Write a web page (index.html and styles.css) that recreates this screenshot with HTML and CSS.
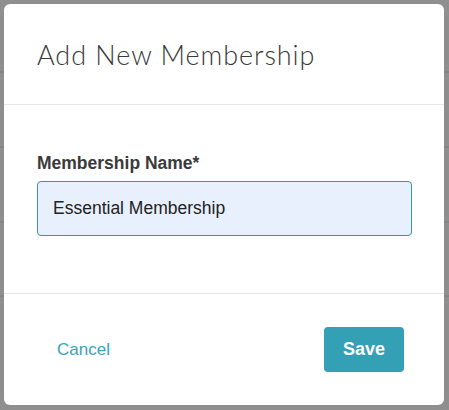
FILE: index.html
```html
<!DOCTYPE html>
<html>
<head>
<meta charset="utf-8">
<link rel="stylesheet" href="styles.css">
</head>
<body>
<div class="modal">
  <div class="modal-header">
    <h1 class="modal-title">Add New Membership</h1>
  </div>
  <div class="modal-body">
    <label class="field-label" for="name">Membership Name*</label>
    <input class="field-input" id="name" type="text" value="Essential Membership">
  </div>
  <div class="modal-footer">
    <button class="btn-cancel" type="button">Cancel</button>
    <button class="btn-save" type="button">Save</button>
  </div>
</div>
</body>
</html>
```
FILE: styles.css
```css
html, body {
  margin: 0;
  padding: 0;
}
body {
  width: 449px;
  height: 410px;
  overflow: hidden;
  background-color: #8f8f8f;
  background-image:
    linear-gradient(#858585, #858585),
    linear-gradient(#858585, #858585),
    linear-gradient(#858585, #858585),
    linear-gradient(#858585, #858585);
  background-repeat: no-repeat;
  background-size: 100% 2px;
  background-position: 0 71px, 0 146px, 0 221px, 0 295px;
  padding: 4px;
  box-sizing: border-box;
  font-family: "Liberation Sans", Arial, sans-serif;
}
.modal {
  width: 440px;
  height: 401px;
  background: #fff;
  border-radius: 6px;
  display: flex;
  flex-direction: column;
  overflow: hidden;
}
.modal-header {
  height: 100px;
  border-bottom: 1px solid #e6e6e6;
  display: flex;
  align-items: center;
  padding-left: 33px;
}
.modal-title {
  margin: 0;
  font-family: Lato, "Liberation Sans", sans-serif;
  font-weight: 300;
  font-size: 27px;
  color: #3a3a3a;
  letter-spacing: 0.95px;
}
.modal-body {
  height: 189px;
  box-sizing: border-box;
  border-bottom: 1px solid #e6e6e6;
  padding: 48px 32px 0 33px;
  display: flex;
  flex-direction: column;
}
.field-label {
  font-weight: bold;
  font-size: 17.5px;
  line-height: 20px;
  color: #3a3a3a;
  margin-bottom: 8px;
}
.field-input {
  width: 375px;
  height: 55px;
  box-sizing: border-box;
  border: 1px solid #3a9a8c;
  border-radius: 4px;
  background: #e8f0fe;
  padding: 0 15px;
  font-family: "Liberation Sans", Arial, sans-serif;
  font-size: 17.5px;
  color: #222;
  outline: none;
}
.modal-footer {
  flex: 1;
  display: flex;
  align-items: center;
  justify-content: space-between;
  padding: 0 40px 0 53px;
}
.btn-cancel {
  background: none;
  border: none;
  padding: 0;
  font-family: "Liberation Sans", Arial, sans-serif;
  font-size: 17px;
  color: #3aa3b8;
  cursor: pointer;
}
.btn-save {
  width: 80px;
  height: 45px;
  border: none;
  border-radius: 4px;
  background: #33a0b6;
  color: #fff;
  font-family: "Liberation Sans", Arial, sans-serif;
  font-weight: bold;
  font-size: 18px;
  cursor: pointer;
}
```
